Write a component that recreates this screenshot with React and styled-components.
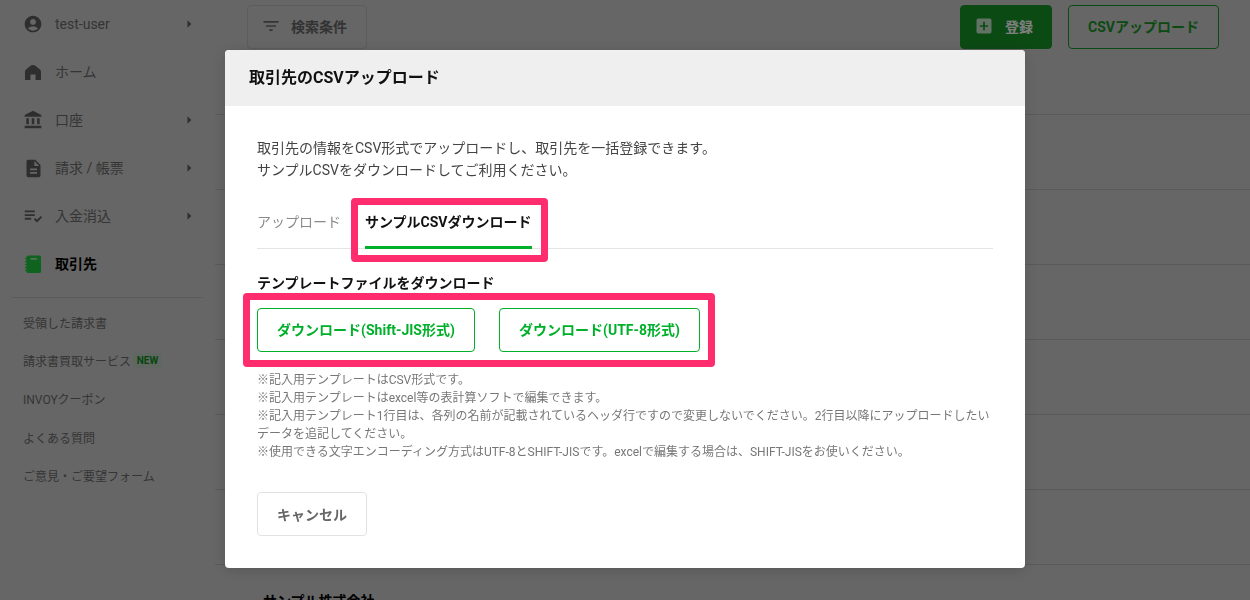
import React from "react";
import styled, { createGlobalStyle } from "styled-components";
import {
  MdAccountCircle, MdAccountBalance, MdDescription, MdPlaylistAddCheck,
  MdFilterList, MdAddBox, MdArrowRight,
} from "react-icons/md";

const Global = createGlobalStyle`
  html, body { margin: 0; padding: 0; height: 100%; overflow: hidden; }
  body { font-family: Roboto, "Noto Sans CJK JP", sans-serif; }
  * { box-sizing: border-box; }
`;

const Page = styled.div`
  display: flex; width: 1250px; height: 600px; overflow: hidden; background: #cdcdcd;
`;
const Sidebar = styled.aside`
  width: 215px; flex: none; display: flex; flex-direction: column;
`;
const MainNav = styled.nav`
  display: flex; flex-direction: column; padding-bottom: 9px; margin: 0 12px; border-bottom: 1px solid #b6b6b6;
`;
const NavItem = styled.div`
  height: 48px; display: flex; align-items: center; font-size: 14px; margin: 0 -12px; padding-left: 21px;
  color: ${p => (p.$active ? "#000" : "#6a6a6a")};
  font-weight: ${p => (p.$active ? 700 : 400)};
`;
const NavIcon = styled.span`
  width: 24px; height: 24px; flex: none; display: flex; align-items: center; justify-content: center;
  color: #5c5c5c; margin-right: 10px;
  svg { display: block; }
`;
const NavLabel = styled.span`flex: 1; line-height: 20px;`;
const NavArrow = styled.span`
  width: 18px; height: 18px; display: flex; color: #5c5c5c; margin-right: 17px;
`;
const SubNav = styled.nav`display: flex; flex-direction: column; padding-top: 6px;`;
const SubItem = styled.div`
  height: 38.2px; display: flex; align-items: center; padding-left: 23px; font-size: 12px; color: #6a6a6a;
  padding-bottom: 1px;
`;
const NewBadge = styled.span`
  margin-left: 2px; padding: 0 4px; width: 29px; height: 15px; display: inline-flex; align-items: center; justify-content: center;
  font-size: 10px; font-weight: 700; color: #0e8a1e; background: #bfcfc1;
`;

const Main = styled.main`flex: 1; display: flex; flex-direction: column; min-width: 0;`;
const TopBar = styled.div`
  height: 115px; flex: none; padding: 5px 31px 0 32px; display: flex; align-items: flex-start; gap: 16px;
  border-bottom: 1px solid #b4b4b4;
`;
const BarButton = styled.button`
  height: 44px; display: inline-flex; align-items: center; border-radius: 4px;
  justify-content: ${p => (p.$icon ? "flex-start" : "center")};
  font: 700 14px Roboto, "Noto Sans CJK JP", sans-serif;
  padding: 0 0 2px ${p => (p.$icon ? "13px" : "0")};
  width: ${p => p.$w}px;
  color: ${p => p.$color};
  background: ${p => p.$bg || "transparent"};
  border: 1px solid ${p => p.$border};
  svg { display: block; }
`;
const Spacer = styled.div`flex: 1;`;
const FilterIcon = styled.span`display: flex; margin-right: 10px; color: #6a6a6a;`;
const PlusIcon = styled.span`display: flex; margin-right: 11px; color: #fff; opacity: .75;`;
const Row = styled.div`
  height: 75px; flex: none; border-bottom: 1px solid #b4b4b4; padding: 25px 0 0 48px;
  font-size: 14px; font-weight: 700; color: #000;
`;

const Overlay = styled.div`
  position: fixed; inset: 0; background: rgba(0,0,0,.5); display: flex; justify-content: center; align-items: flex-start; padding-top: 50px;
`;
const Modal = styled.div`
  width: 800px; height: 518px; background: #fff; border-radius: 4px;
  box-shadow: 0 2px 14px rgba(0,0,0,.16);
`;
const ModalHeader = styled.header`
  height: 56px; background: #efefef; border-radius: 4px 4px 0 0; display: flex; align-items: center; padding: 0 0 5px 24px;
  font-size: 16px; font-weight: 700; color: #111;
`;
const ModalBody = styled.div`padding: 30px 32px 0;`;
const Intro = styled.p`margin: 0 0 -1px; font-size: 14px; line-height: 22px; color: #444; padding-top: 1px;`;
const Tabs = styled.div`
  display: flex; margin-top: 20px; height: 49px; border-bottom: 1px solid #e4e4e4; gap: 24px; align-items: stretch;
`;
const Tab = styled.div`
  position: relative; font-size: 14px; line-height: 20px; padding-top: 12px;
  color: ${p => (p.$active ? "#111" : "#8a8a8a")};
  font-weight: ${p => (p.$active ? 700 : 400)};
  ${p => p.$active && "border-bottom: 3px solid #00b02a; height: 49px;"}
`;
const Highlight = styled.span`
  position: absolute; border: 7px solid #ff2d6d; border-radius: 4px; pointer-events: none;
  top: ${p => p.$t}px; right: ${p => p.$r}px; bottom: ${p => p.$b}px; left: ${p => p.$l}px;
`;
const SectionTitle = styled.h3`
  margin: 23px 0 0; font-size: 14px; line-height: 22px; font-weight: 700; color: #111;
`;
const ButtonRow = styled.div`
  position: relative; display: inline-flex; gap: 24px; margin-top: 14px; vertical-align: top;
`;
const DownloadButton = styled.button`
  height: 44px; width: ${p => p.$w}px; background: #fff; border: 1px solid #00b02a; border-radius: 4px; padding: 0 0 2px;
  font: 700 14px Roboto, "Noto Sans CJK JP", sans-serif; color: #00b02a;
`;
const Notes = styled.div`margin-top: 19px; font-size: 12px; line-height: 18px; color: #777;`;
const Note = styled.div``;
const CancelButton = styled.button`
  display: block; margin-top: 31px; width: 110px; height: 44px; background: #fff; border: 1px solid #e2e2e2; border-radius: 4px; padding: 0;
  font: 700 14px Roboto, "Noto Sans CJK JP", sans-serif; color: #666;
`;

const HomeIcon = ({ size }) => (
  <svg width={size} height={size} viewBox="0 0 24 24" fill="currentColor" aria-hidden="true">
    <path d="M12 5c-1 0-2 .4-2.8 1L5.3 9.2C4.5 9.9 4 10.8 4 12v8h5.5v-5.5h5V20H20v-8c0-1.2-.5-2.1-1.3-2.8L14.8 6C14 5.4 13 5 12 5z" />
  </svg>
);
const Notebook = () => (
  <svg width="24" height="24" viewBox="0 0 24 24" aria-hidden="true">
    <rect x="5.5" y="3.5" width="14.5" height="17.5" rx="1.6" fill="#1cc83c" />
    <path d="M4.2 6.5h2.4M4.2 9.5h2.4M4.2 12.5h2.4M4.2 15.5h2.4M4.2 18.5h2.4" stroke="#1cc83c" strokeWidth="1.3" />
    <rect x="9.5" y="6.2" width="6.5" height="1.4" fill="#cfe3d2" />
  </svg>
);

const items = [
  { label: "test-user", Icon: MdAccountCircle, arrow: true, size: 20 },
  { label: "ホーム", Icon: HomeIcon, size: 24 },
  { label: "口座", Icon: MdAccountBalance, arrow: true, size: 20 },
  { label: "請求 / 帳票", Icon: MdDescription, arrow: true, size: 21 },
  { label: "入金消込", Icon: MdPlaylistAddCheck, arrow: true, size: 22 },
];
const subs = ["受領した請求書", "請求書買取サービス", "INVOYクーポン", "よくある質問", "ご意見・ご要望フォーム"];
const notes = [
  "※記入用テンプレートはCSV形式です。",
  "※記入用テンプレートはexcel等の表計算ソフトで編集できます。",
  "※記入用テンプレート1行目は、各列の名前が記載されているヘッダ行ですので変更しないでください。2行目以降にアップロードしたいデータを追記してください。",
  "※使用できる文字エンコーディング方式はUTF-8とSHIFT-JISです。excelで編集する場合は、SHIFT-JISをお使いください。",
];

export default function App() {
  return (
    <>
      <Global />
      <Page>
        <Sidebar>
          <MainNav>
            {items.map(({ label, Icon, arrow, size }) => (
              <NavItem key={label}>
                <NavIcon><Icon size={size} /></NavIcon>
                <NavLabel>{label}</NavLabel>
                {arrow && <NavArrow><MdArrowRight size={18} /></NavArrow>}
              </NavItem>
            ))}
            <NavItem $active>
              <NavIcon><Notebook /></NavIcon>
              <NavLabel>取引先</NavLabel>
            </NavItem>
          </MainNav>
          <SubNav>
            {subs.map((s, i) => (
              <SubItem key={s}>{s}{i === 1 && <NewBadge>NEW</NewBadge>}</SubItem>
            ))}
          </SubNav>
        </Sidebar>
        <Main>
          <TopBar>
            <BarButton $icon $w={120} $color="#666" $border="#b9b9b9">
              <FilterIcon><MdFilterList size={20} /></FilterIcon>検索条件
            </BarButton>
            <Spacer />
            <BarButton $icon $w={92} $color="#fff" $bg="#189428" $border="#189428">
              <PlusIcon><MdAddBox size={20} /></PlusIcon>登録
            </BarButton>
            <BarButton $w={151} $color="#189428" $border="#189428">CSVアップロード</BarButton>
          </TopBar>
          {[0, 1, 2, 3, 4, 5].map(i => <Row key={i} />)}
          <Row>サンプル株式会社</Row>
        </Main>
      </Page>
      <Overlay>
        <Modal>
          <ModalHeader>取引先のCSVアップロード</ModalHeader>
          <ModalBody>
            <Intro>
              取引先の情報をCSV形式でアップロードし、取引先を一括登録できます。<br />
              サンプルCSVをダウンロードしてご利用ください。
            </Intro>
            <Tabs>
              <Tab>アップロード</Tab>
              <Tab $active>
                サンプルCSVダウンロード
                <Highlight $t={-2} $r={-16} $b={-16} $l={-14} />
              </Tab>
            </Tabs>
            <SectionTitle>テンプレートファイルをダウンロード</SectionTitle>
            <ButtonRow>
              <DownloadButton $w={218}>ダウンロード(Shift-JIS形式)</DownloadButton>
              <DownloadButton $w={201}>ダウンロード(UTF-8形式)</DownloadButton>
              <Highlight $t={-15} $r={-15} $b={-15} $l={-14} />
            </ButtonRow>
            <Notes>
              {notes.map(n => <Note key={n}>{n}</Note>)}
            </Notes>
            <CancelButton>キャンセル</CancelButton>
          </ModalBody>
        </Modal>
      </Overlay>
    </>
  );
}
